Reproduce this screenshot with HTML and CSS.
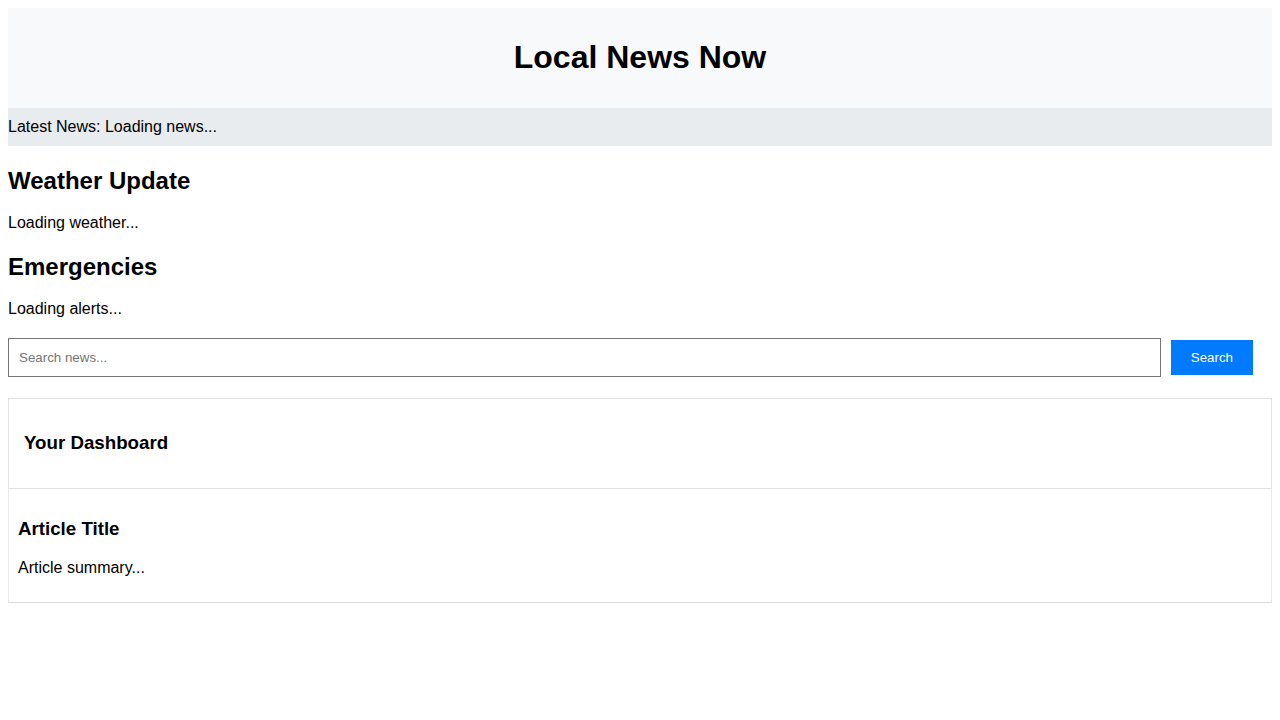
FILE: index.html
```html
<!DOCTYPE html>
<html lang="en">
<head>
<meta charset="utf-8">
<title>Local News Now</title>
<link rel="stylesheet" href="styles.css">
</head>
<body>
<header class="site-header">
  <h1>Local News Now</h1>
</header>
<div class="ticker">Latest News: Loading news...</div>
<section class="weather">
  <h2>Weather Update</h2>
  <p>Loading weather...</p>
</section>
<section class="emergencies">
  <h2>Emergencies</h2>
  <p>Loading alerts...</p>
</section>
<form class="search-bar">
  <input type="text" class="search-input" placeholder="Search news...">
  <button type="button" class="search-button">Search</button>
</form>
<section class="dashboard">
  <h3>Your Dashboard</h3>
</section>
<article class="article-card">
  <h3>Article Title</h3>
  <p>Article summary...</p>
</article>
</body>
</html>
```
FILE: styles.css
```css
body {
  margin: 8px;
  font-family: "Liberation Sans", Arial, sans-serif;
  color: #000;
  background: #fff;
}

.site-header {
  background: #f8f9fa;
  padding: 10px;
  text-align: center;
}

.site-header h1 {
  font-size: 32px;
  margin: 21.44px 0;
}

.ticker {
  background: #e9ecef;
  padding: 10px 0;
  font-size: 16px;
}

h2 {
  font-size: 24px;
  line-height: 30.6px;
  margin: 19.92px 0 17.4px;
}

p {
  margin: 16px 0;
}

.search-bar {
  display: flex;
  align-items: center;
  gap: 10px;
  margin: 20px 0 21px;
  padding-right: 19px;
}

.search-input {
  flex: 1;
  font-family: "Liberation Sans", Arial, sans-serif;
  font-size: 13.333px;
  padding: 11px 10px;
  border: 1px solid #767676;
  border-radius: 0;
  margin: 0;
}

.search-input::placeholder {
  color: #757575;
}

.search-button {
  font-family: "Liberation Sans", Arial, sans-serif;
  font-size: 13.333px;
  background: #007bff;
  color: #fff;
  border: none;
  padding: 10px 20px;
  margin: 0;
  line-height: normal;
}

.dashboard {
  border: 1px solid #e0e0e0;
  padding: 15px;
}

h3 {
  font-size: 18.72px;
  margin: 18.72px 0;
}

.article-card {
  background: #fff;
  padding: 10px 9px 9px;
  border: 1px solid #ececec;
  border-top: none;
  border-bottom-color: #dcdcdc;
}
```
